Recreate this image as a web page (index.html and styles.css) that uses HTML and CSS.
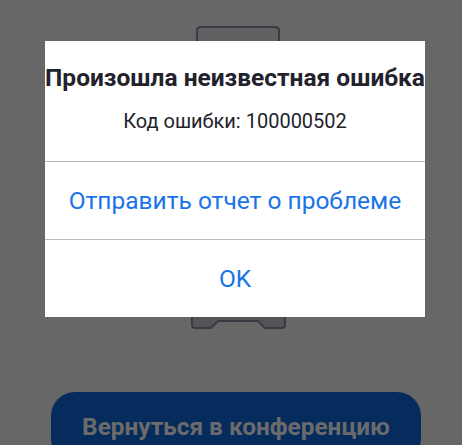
FILE: index.html
```html
<!DOCTYPE html>
<html lang="ru">
<head>
<meta charset="utf-8">
<link rel="stylesheet" href="styles.css">
</head>
<body>
<main class="screen">
  <svg class="illustration" width="462" height="340" viewBox="0 0 462 340" aria-hidden="true">
    <path d="M197,60 V31 Q197,27 201,27 H275 Q279,27 279,31 V60" fill="#616163" stroke="#3a3a42" stroke-width="2"/>
    <path d="M192,290 V325 Q192,328 195,328 H211 L218,321 H258 L265,328 H282 Q285,328 285,325 V290" fill="#555558" stroke="#3a3a42" stroke-width="2"/>
  </svg>
  <button class="back-btn">Вернуться в конференцию</button>
</main>
<div class="dialog" role="alertdialog">
  <div class="dialog-body">
    <h1 class="dialog-title">Произошла неизвестная ошибка</h1>
    <p class="dialog-text">Код ошибки: 100000502</p>
  </div>
  <button class="dialog-action">Отправить отчет о проблеме</button>
  <button class="dialog-action">OK</button>
</div>
</body>
</html>
```
FILE: styles.css
```css
html, body {
  margin: 0;
  padding: 0;
  height: 100%;
  overflow: hidden;
}
body {
  background: #676767;
  font-family: Roboto, "Noto Sans", sans-serif;
  position: relative;
}
.screen {
  display: flex;
  flex-direction: column;
}
.illustration {
  display: block;
}
.back-btn {
  margin: 52px 0 0 51px;
  width: 370px;
  height: 70px;
  border: none;
  border-radius: 24px;
  background: #062c5e;
  color: #6b6b6b;
  font-family: Roboto, sans-serif;
  font-weight: 700;
  font-size: 24.4px;
  padding: 23px 0 0;
  display: flex;
  align-items: flex-start;
  justify-content: center;
  box-sizing: border-box;
  line-height: 1;
}
.dialog {
  position: absolute;
  left: 45px;
  top: 41px;
  width: 380px;
  height: 276px;
  background: #fff;
  display: flex;
  flex-direction: column;
}
.dialog-body {
  height: 121px;
  box-sizing: border-box;
  border-bottom: 1px solid #b9b9b9;
  display: flex;
  flex-direction: column;
  align-items: center;
  padding-top: 23px;
}
.dialog-title {
  margin: 0;
  font-size: 24.5px;
  font-weight: 700;
  color: #22222c;
  line-height: 28px;
  white-space: nowrap;
}
.dialog-text {
  margin: 17px 0 0;
  font-size: 20px;
  color: #22222c;
  line-height: 24px;
}
.dialog-action {
  flex: 1;
  border: none;
  background: #fff;
  color: #1a73e8;
  font-family: Roboto, sans-serif;
  font-size: 24.5px;
  padding: 0;
}
.dialog-action + .dialog-action {
  border-top: 1px solid #b9b9b9;
}
```
